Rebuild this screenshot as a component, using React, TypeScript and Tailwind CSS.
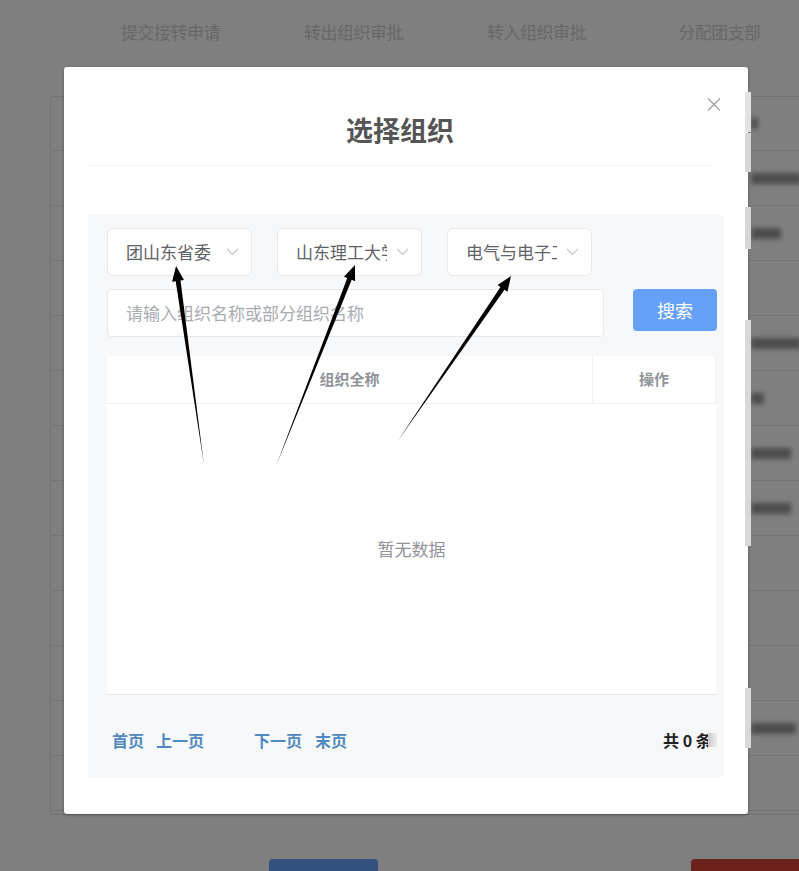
import React from 'react';

const tabs = ['提交接转申请', '转出组织审批', '转入组织审批', '分配团支部'];

// blurred content peeking out on the right of the modal, per row
const rowBlur: Record<number, number> = { 0: 7, 1: 50, 2: 30, 4: 50, 5: 13, 6: 40, 7: 40, 11: 45 };

const selects = ['团山东省委', '山东理工大学', '电气与电子工程学院'];

const arrows = [
  { tail: [204, 465], tip: [176, 266] },
  { tail: [276, 466], tip: [355, 265] },
  { tail: [397, 442], tip: [511, 276] },
];

const arrowPoints = (tail: number[], tip: number[]) => {
  const dx = tip[0] - tail[0];
  const dy = tip[1] - tail[1];
  const len = Math.hypot(dx, dy);
  const ux = dx / len, uy = dy / len;
  const nx = -uy, ny = ux;
  const headLen = 15, headW = 6, shaftW = 2.4;
  const bx = tip[0] - ux * headLen, by = tip[1] - uy * headLen;
  const pts = [
    [tail[0], tail[1]],
    [bx + nx * shaftW, by + ny * shaftW],
    [bx + nx * headW, by + ny * headW],
    [tip[0], tip[1]],
    [bx - nx * headW, by - ny * headW],
    [bx - nx * shaftW, by - ny * shaftW],
  ];
  return pts.map(p => `${p[0].toFixed(1)},${p[1].toFixed(1)}`).join(' ');
};

const Chevron = () => (
  <svg width="13" height="8" viewBox="0 0 13 8" className="shrink-0">
    <polyline points="1,1 6.5,6.5 12,1" fill="none" stroke="#c0c4cc" strokeWidth="1.1" />
  </svg>
);

export default function App() {
  return (
    <div className="relative w-[799px] h-[871px] overflow-hidden bg-white font-['Noto_Sans_CJK_SC','Liberation_Sans',sans-serif]">
      {/* page underneath */}
      <div className="flex h-[64px] items-center pl-[79px]">
        {tabs.map(t => (
          <div key={t} className="w-[183px] shrink-0 text-center text-[17px] leading-[24px] text-[#cfcfcf] tracking-[-0.5px]">
            {t}
          </div>
        ))}
      </div>
      <div className="ml-[50px] mt-[32px] h-[719px] w-[780px] overflow-hidden rounded-[3px] border border-[#e2e2e2]">
        {Array.from({ length: 13 }).map((_, i) => (
          <div key={i} className={`flex items-center border-b border-[#e6e6e6] ${i === 0 ? 'h-[54px]' : 'h-[55px]'}`}>
            {rowBlur[i] && (
              <div className="ml-[700px] h-[11px] bg-[#9a9a9a] blur-[2.5px]" style={{ width: rowBlur[i] }} />
            )}
          </div>
        ))}
      </div>
      <div className="relative mt-[44px] h-[20px]">
        <div className="absolute left-[269px] top-0 h-[20px] w-[109px] rounded-t-[4px] bg-[#68a0fe]" />
        <div className="absolute left-[691px] top-0 h-[20px] w-[120px] rounded-t-[4px] bg-[#d44232]" />
      </div>

      {/* mask */}
      <div className="absolute inset-0 bg-black/50" />

      {/* modal */}
      <div className="absolute left-[64px] top-[67px] h-[747px] w-[684px] rounded-[3px] bg-white px-6 shadow-[0_1px_3px_rgba(0,0,0,0.35)]">
        <button className="absolute right-[27px] top-[31px] p-0">
          <svg width="14" height="13" viewBox="0 0 14 13">
            <line x1="1" y1="0.5" x2="13" y2="12.5" stroke="#a0a0a0" strokeWidth="1.2" />
            <line x1="13" y1="0.5" x2="1" y2="12.5" stroke="#a0a0a0" strokeWidth="1.2" />
          </svg>
        </button>
        <div className="mr-[12px] h-[99px] border-b border-[#f2f3f5] pt-[44px] text-center text-[27px] font-bold leading-[38px] text-[#555555]">
          选择组织
        </div>

        <div className="mt-[49px] h-[562px] bg-[#f7f8fa] pl-[19px] pr-[7px] pt-[13px]">
          <div className="flex gap-[25px]">
            {selects.map(s => (
              <div key={s} className="flex h-[48px] w-[145px] items-center rounded-[6px] border border-[#e6e8ec] bg-white pl-[18px]">
                <div className="w-[91px] overflow-hidden whitespace-nowrap text-[17px] leading-[24px] text-[#606266]">{s}</div>
                <div className="ml-[9px]"><Chevron /></div>
              </div>
            ))}
          </div>

          <div className="mt-[13px] flex">
            <div className="flex h-[48px] w-[497px] items-center rounded-[4px] border border-[#e6e8ec] bg-white pl-[18px] text-[17px] text-[#a8abb2]">
              请输入组织名称或部分组织名称
            </div>
            <button className="ml-[29px] h-[42px] w-[84px] rounded-[4px] bg-[#66a1f9] text-[18px] text-white">
              搜索
            </button>
          </div>

          <div className="mt-[19px] w-[609px] bg-white">
            <div className="grid h-[48px] grid-cols-[486px_123px] border-b border-[#eef0f4] text-[15px] font-bold text-[#909399]">
              <div className="flex items-center justify-center border-r border-[#eef0f4]">组织全称</div>
              <div className="flex items-center justify-center border-r border-[#eef0f4]">操作</div>
            </div>
            <div className="flex h-[291px] items-center justify-center border-b border-[#e6e8ee] text-[17px] text-[#909399]">
              暂无数据
            </div>
          </div>

          <div className="mt-[34px] flex items-center text-[16px] font-bold leading-[22px] text-[#5088bf]">
            <span className="ml-[5px]">首页</span>
            <span className="ml-[12px]">上一页</span>
            <span className="ml-[50px]">下一页</span>
            <span className="ml-[13px]">末页</span>
            <div className="ml-auto flex items-center">
              <div className="w-[45px] overflow-hidden whitespace-nowrap text-[#222222]">共 0 条</div>
              <div className="h-[14px] w-[9px] bg-gradient-to-r from-[#c8c8c8] to-[#eeeeee]" />
            </div>
          </div>
        </div>
      </div>

      {/* strips lying over the modal edge */}
      <div className="absolute left-[745px] top-[92px] h-[40px] w-[6px] bg-[#e2e2e2]" />
      <div className="absolute left-[745px] top-[133px] h-[39px] w-[6px] bg-[#d6d6d6]" />
      <div className="absolute left-[745px] top-[207px] h-[42px] w-[6px] bg-[#d6d6d6]" />
      <div className="absolute left-[745px] top-[320px] h-[226px] w-[6px] bg-[#d8d8d8]" />
      <div className="absolute left-[745px] top-[688px] h-[60px] w-[6px] bg-[#d8d8d8]" />

      {/* annotation arrows */}
      <svg className="pointer-events-none absolute left-0 top-0" width="799" height="871" viewBox="0 0 799 871">
        {arrows.map((a, i) => (
          <polygon key={i} points={arrowPoints(a.tail, a.tip)} fill="#000" />
        ))}
      </svg>
    </div>
  );
}
